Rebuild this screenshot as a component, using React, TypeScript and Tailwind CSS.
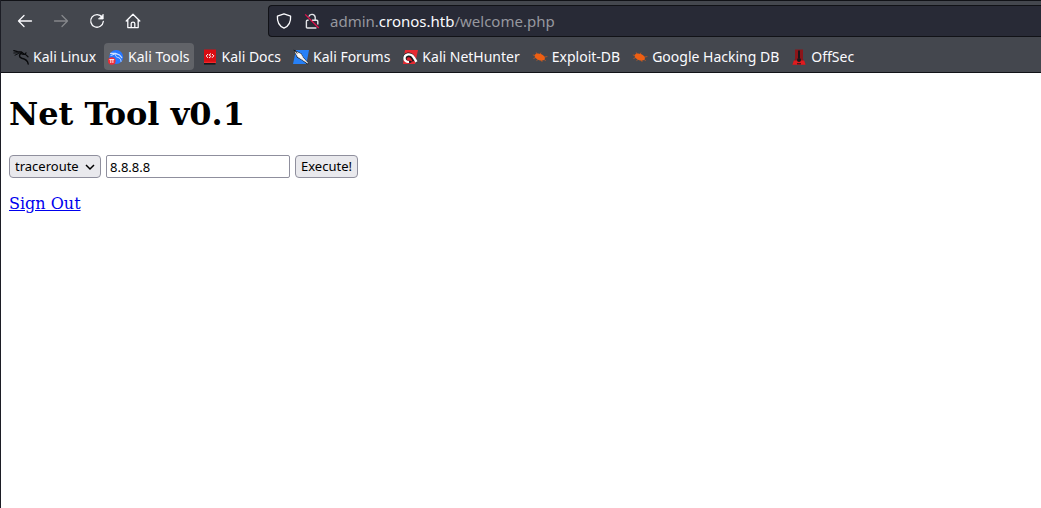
import type { ReactNode } from "react";

function Dragon({ color }: { color: string }) {
  return (
    <g fill="none" stroke={color} strokeLinecap="round" strokeLinejoin="round">
      <path d="M0.8 1.6 L4.5 2.6 L8.5 3 L11.2 5.2" strokeWidth="1.3" />
      <path d="M0.8 4 L4.6 3.8 L8.6 4.2 M2 6.2 L5.4 4.6" strokeWidth="0.9" />
      <path d="M8.4 3.8 C6 5.4 5.6 8.4 8.8 9.2 C12.4 10 14.8 11 15.2 15" strokeWidth="1.4" />
      <path d="M9 5.2 L12.4 5.4 L15 7.8 M12.2 5.2 L13 3.8" strokeWidth="1.2" />
    </g>
  );
}

function Bug() {
  return (
    <g stroke="#ee5f13" strokeLinecap="round">
      <ellipse cx="7.8" cy="8" rx="5.4" ry="3.2" transform="rotate(22 7.8 8)" fill="#ee5f13" stroke="none" />
      <path d="M3.6 6.6 L1.2 6 M4 8.4 L1.8 9.4 M5.2 6 L4.4 3.8 M8 5.6 L8.8 4 M12 8.2 L15 7.6 M6.4 10.2 L4.8 11.4 M9.2 11 L10 12.6 M12 10.4 L13.4 11.4" strokeWidth="0.6" />
    </g>
  );
}

const bookmarks: { label: string; active?: boolean; art: ReactNode }[] = [
  { label: "Kali Linux", art: <Dragon color="#08090b" /> },
  {
    label: "Kali Tools",
    active: true,
    art: (
      <>
        <circle cx="8.2" cy="8" r="7" fill="#2777ff" />
        <g fill="none" stroke="#cfe2ff" strokeLinecap="round">
          <path d="M2.6 4.4 L7.5 4.4 L11.5 6 L13.8 8.6" strokeWidth="1.1" />
          <path d="M3 6.4 L7 5 M8 5 C6.4 7.2 8.6 8.2 11 8.8 C12.6 9.6 12.8 11 13 12.4" strokeWidth="1" />
        </g>
        <circle cx="3.8" cy="12" r="3.8" fill="#ef2b36" />
        <path d="M1.4 10.6 H6.2 M2.8 10.6 V14 M4.9 10.6 V14" fill="none" stroke="#fff" strokeWidth="0.9" />
      </>
    ),
  },
  {
    label: "Kali Docs",
    art: (
      <>
        <path d="M2 0.5 H14 V14 H2 Z" fill="#d90d12" />
        <path d="M2 14 H13.5 V15.6 H2 Z" fill="#17181c" />
        <path d="M2 12.8 H14 V14 H2 Z" fill="#f02a2c" />
        <path d="M6 5 L4.2 7 L6 8.8 M10 5 L11.8 6.8 L10 8.8 M9 4.6 L7.2 5.8 L8.8 7.6 L7 9" fill="none" stroke="#fff" strokeWidth="1" />
      </>
    ),
  },
  {
    label: "Kali Forums",
    art: (
      <>
        <path d="M3 1 H16 L13.4 15 H0 Z" fill="#2680f7" />
        <path d="M0.4 0.6 L8.4 4.6 L10.5 8.2 L15.8 14.4 L14.6 15.4 L9.2 11.4 L4 8.4 Z" fill="#17181c" />
        <path d="M2 2.6 L7.8 5 L10 8.8 L14.8 14.2 L9.2 10.6 L4.8 7.8 Z" fill="#f6f7f8" stroke="#f6f7f8" strokeWidth="0.7" />
        <path d="M1 1 L4.4 4.6" stroke="#17181c" strokeWidth="0.8" />
      </>
    ),
  },
  {
    label: "Kali NetHunter",
    art: (
      <>
        <path d="M3 1 H16 L13 15 H1 Z" fill="#e62931" />
        <path d="M0.8 9.5 C0.8 3.2 8.5 1.6 12 6.2 L15.4 13.6 L12 12 L7 14.4 Z" fill="#17181c" />
        <path d="M7 12.8 C1.6 13.6 0.8 6.6 6 5.4 C10.2 4.8 11.6 8 14.4 12.8" fill="none" stroke="#fff" strokeWidth="2.4" />
        <path d="M4.6 10 C4.8 7.6 8 7.6 9.2 9.8 L11 13.4 L8.6 11.8 H5.6 Z" fill="#d91f2d" />
      </>
    ),
  },
  { label: "Exploit-DB", art: <Bug /> },
  { label: "Google Hacking DB", art: <Bug /> },
  {
    label: "OffSec",
    art: (
      <>
        <path d="M4 0.5 H12 V10 L14.5 15.5 H1.5 L4 10 Z" fill="#8c1519" />
        <path d="M2.8 11.6 H13.2 L14.6 15.8 H1.4 Z" fill="#e01b1f" />
        <path d="M7 1.5 H9 V9 H7 Z" fill="#17181c" />
        <circle cx="8" cy="11" r="2" fill="#17181c" />
        <path d="M6 14.8 H10" stroke="#17181c" strokeWidth="1" />
      </>
    ),
  },
];

function NavButton({ label, disabled, children }: { label: string; disabled?: boolean; children: ReactNode }) {
  return (
    <button type="button" aria-label={label} disabled={disabled} className="flex size-9 items-center justify-center rounded text-[#fbfbfe] disabled:text-[#85878b]">
      <svg viewBox="0 0 16 16" className="size-4" fill="none" stroke="currentColor" strokeWidth="1.3" strokeLinecap="round" strokeLinejoin="round">
        {children}
      </svg>
    </button>
  );
}

export default function App() {
  return (
    <div className="min-h-screen border-l border-[#1c1d25] bg-white">
      <header className="border-y border-[#111217] bg-[#44474e] font-['Noto_Sans',sans-serif] text-[#fbfbfe]">
        <div className="flex h-10 items-center">
          <nav aria-label="Navigation" className="flex w-[267px] shrink-0 pl-[6px]">
            <NavButton label="Back">
              <path d="M14.5 8 H1.5 M7 2.5 L1.5 8 L7 13.5" />
            </NavButton>
            <NavButton label="Forward" disabled>
              <path d="M1.5 8 H14.5 M9 2.5 L14.5 8 L9 13.5" />
            </NavButton>
            <NavButton label="Reload">
              <path d="M13.2 4.3 A6.3 6.3 0 1 0 14.3 8.5" />
              <path d="M14.2 1.6 V6 H9.8 Z" fill="currentColor" strokeWidth="0.8" />
            </NavButton>
            <NavButton label="Home">
              <path d="M1.2 8 L8 1.2 L14.8 8 M2.8 6.8 V14.6 H13.2 V6.8 M6.2 14.4 V10.4 Q6.2 9.2 8 9.2 Q9.8 9.2 9.8 10.4 V14.4" />
            </NavButton>
          </nav>
          <div className="flex h-8 min-w-0 flex-1 items-center rounded-l border border-r-0 border-[#111217] bg-[#282a36] pl-[7px]">
            <svg viewBox="0 0 16 16" className="size-4 shrink-0" fill="none" stroke="#fbfbfe" strokeWidth="1.3" strokeLinejoin="round">
              <path d="M8 0.8 L14.6 3.2 C15 9.2 12.4 13.2 8 15.2 C3.6 13.2 1 9.2 1.4 3.2 Z" />
            </svg>
            <svg viewBox="0 0 16 16" className="ml-3 size-4 shrink-0" fill="none" stroke="#e3e4e8" strokeWidth="1.4" strokeLinejoin="round">
              <path d="M4.8 3.6 A3.3 3.3 0 0 1 11.2 4.2 V6.8 M8 7.2 H12.8 Q13.8 7.2 13.8 8.2 V11.6 M12.4 15 H3.4 Q2.4 15 2.4 14 V8.2 Q2.4 7.2 3.4 7.2 H4.6" />
              <path d="M1.2 1.4 L14.8 15" stroke="#e2104c" strokeWidth="1.3" />
            </svg>
            <div className="ml-[10px] truncate text-[15px] leading-5 text-[#96979e]">
              admin.<span className="text-[#fbfbfe]">cronos.htb</span>/welcome.php
            </div>
          </div>
        </div>
        <nav aria-label="Bookmarks" className="flex h-[31px] items-start gap-1 overflow-hidden pt-[2px] pl-2">
          {bookmarks.map(({ label, active, art }) => (
            <a key={label} href="#" className={`flex h-[27px] shrink-0 items-center gap-1 rounded px-1 text-sm whitespace-nowrap ${active ? "bg-[#616368]" : ""}`}>
              <svg viewBox="0 0 16 16" className="size-4" aria-hidden="true">{art}</svg>
              {label}
            </a>
          ))}
        </nav>
      </header>
      <main className="px-2 pt-[21px] font-['DejaVu_Serif',serif] text-base text-black">
        <h1 className="text-[32px] leading-10 font-bold">Net Tool v0.1</h1>
        <form className="mt-[21px] flex gap-[5px] font-['Noto_Sans',sans-serif] text-[13px]" onSubmit={(e) => e.preventDefault()}>
          <div className="relative">
            <select aria-label="Command" className="block h-[23px] w-[92px] appearance-none rounded border border-[#8f8f9d] bg-[#e9e9ed] pl-[5px]">
              <option>traceroute</option>
              <option>ping</option>
            </select>
            <svg viewBox="0 0 10 10" className="pointer-events-none absolute top-[7px] right-[6px] size-[10px]" fill="none" stroke="#000" strokeWidth="1.5">
              <path d="M1 3 L5 7 L9 3" />
            </svg>
          </div>
          <input aria-label="Host" defaultValue="8.8.8.8" className="h-[23px] w-[184px] rounded-xs border border-[#8f8f9d] bg-white px-[3px]" />
          <button type="submit" className="h-[23px] rounded border border-[#8f8f9d] bg-[#e9e9ed] px-[5px]">Execute!</button>
        </form>
        <p className="mt-4 leading-5">
          <a href="#" className="text-[#0000ee] underline">Sign Out</a>
        </p>
      </main>
    </div>
  );
}
